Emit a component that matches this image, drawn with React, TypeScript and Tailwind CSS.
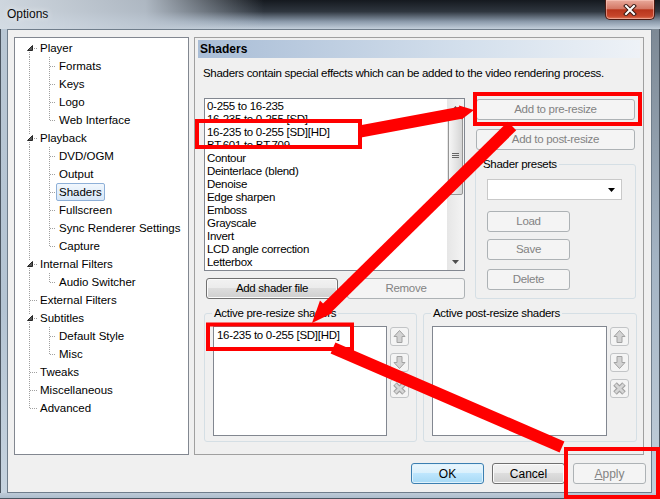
import React from 'react';

type TreeNode = {
  label: string;
  level: 0 | 1;
  caret?: boolean;
  last?: boolean;
  selected?: boolean;
};

const tree: TreeNode[] = [
  { label: 'Player', level: 0, caret: true },
  { label: 'Formats', level: 1 },
  { label: 'Keys', level: 1 },
  { label: 'Logo', level: 1 },
  { label: 'Web Interface', level: 1, last: true },
  { label: 'Playback', level: 0, caret: true },
  { label: 'DVD/OGM', level: 1 },
  { label: 'Output', level: 1 },
  { label: 'Shaders', level: 1, selected: true },
  { label: 'Fullscreen', level: 1 },
  { label: 'Sync Renderer Settings', level: 1 },
  { label: 'Capture', level: 1, last: true },
  { label: 'Internal Filters', level: 0, caret: true },
  { label: 'Audio Switcher', level: 1, last: true },
  { label: 'External Filters', level: 0 },
  { label: 'Subtitles', level: 0, caret: true },
  { label: 'Default Style', level: 1 },
  { label: 'Misc', level: 1, last: true },
  { label: 'Tweaks', level: 0 },
  { label: 'Miscellaneous', level: 0 },
  { label: 'Advanced', level: 0 },
];

const shaderFiles = [
  '0-255 to 16-235',
  '16-235 to 0-255 [SD]',
  '16-235 to 0-255 [SD][HD]',
  'BT.601 to BT.709',
  'Contour',
  'Deinterlace (blend)',
  'Denoise',
  'Edge sharpen',
  'Emboss',
  'Grayscale',
  'Invert',
  'LCD angle correction',
  'Letterbox',
];

const dot = { stroke: '#a0a0a0', strokeDasharray: '1 1' };

function TreeGutter({ node, first, lastRoot }: { node: TreeNode; first: boolean; lastRoot: boolean }) {
  if (node.level === 1) {
    return (
      <svg width="41" height="18" className="shrink-0">
        <line x1="14.5" y1="0" x2="14.5" y2="18" {...dot} />
        <line x1="34.5" y1="0" x2="34.5" y2={node.last ? 10 : 18} {...dot} />
        <line x1="35" y1="9.5" x2="41" y2="9.5" {...dot} />
      </svg>
    );
  }
  return (
    <svg width="22" height="18" className="shrink-0">
      {node.caret ? (
        <>
          {!first && <line x1="14.5" y1="0" x2="14.5" y2="5" {...dot} />}
          <line x1="14.5" y1="13" x2="14.5" y2="18" {...dot} />
          <line x1="19" y1="9.5" x2="22" y2="9.5" {...dot} />
          <path d="M17.5 6.5 V11.5 H12.5 Z" fill="#595959" stroke="#262626" strokeLinejoin="round" />
        </>
      ) : (
        <>
          <line x1="14.5" y1="0" x2="14.5" y2={lastRoot ? 10 : 18} {...dot} />
          <line x1="15" y1="9.5" x2="22" y2="9.5" {...dot} />
        </>
      )}
    </svg>
  );
}

type BtnKind = 'normal' | 'disabled' | 'default';

function Button({ kind = 'normal', className = '', children }: { kind?: BtnKind; className?: string; children: React.ReactNode }) {
  const look =
    kind === 'disabled'
      ? 'border-[#adb2b5] bg-[#f4f4f4] text-[#838383]'
      : kind === 'default'
        ? 'border-[#3c7fb1] bg-[linear-gradient(#eaf6fd,#d9f0fc_50%,#bee6fd_50%,#a7d9f5)] shadow-[inset_0_0_0_1px_#dff2fc]'
        : 'border-[#707070] bg-[linear-gradient(#f2f2f2,#ebebeb_50%,#dddddd_50%,#cfcfcf)] shadow-[inset_0_0_0_1px_#fbfbfb]';
  return (
    <div className={`flex shrink-0 items-center justify-center rounded-[3px] border leading-none ${look} ${className}`}>
      {children}
    </div>
  );
}

function SmallBtn({ icon }: { icon: 'up' | 'down' | 'x' }) {
  return (
    <div className="flex h-[19px] w-[19px] items-center justify-center rounded-[3px] border border-[#c2c4c6] bg-[#f4f4f4]">
      <svg width="15" height="15" viewBox="0 0 15 15">
        {icon === 'up' && (
          <path d="M7.5 1.5 L13 7.5 H10 V13.5 H5 V7.5 H2 Z" fill="#d2d2d2" stroke="#a2a2a2" strokeLinejoin="round" />
        )}
        {icon === 'down' && (
          <path d="M7.5 13.5 L13 7.5 H10 V1.5 H5 V7.5 H2 Z" fill="#d2d2d2" stroke="#a2a2a2" strokeLinejoin="round" />
        )}
        {icon === 'x' && (
          <>
            <path d="M3 3 L12 12 M12 3 L3 12" stroke="#a2a2a2" strokeWidth="5" />
            <path d="M3.5 3.5 L11.5 11.5 M11.5 3.5 L3.5 11.5" stroke="#d6d6d6" strokeWidth="2.6" />
          </>
        )}
      </svg>
    </div>
  );
}

function ShaderGroup({ title, listW, items }: { title: string; listW: string; items: string[] }) {
  return (
    <fieldset className="h-full w-full rounded-[3px] border border-[#d5dfe5]">
      <legend className="ml-[7px] px-[2px] leading-[14px]">{title}</legend>
      <div className="mt-[6px] flex pl-[8px]">
        <div className={`h-[110px] border border-[#828790] bg-white pl-[3px] pt-[2px] leading-[13px] ${listW}`}>
          {items.map((s) => (
            <div key={s}>{s}</div>
          ))}
        </div>
        <div className="ml-[3px] mt-[1px] flex flex-col gap-[7px]">
          <SmallBtn icon="up" />
          <SmallBtn icon="down" />
          <SmallBtn icon="x" />
        </div>
      </div>
    </fieldset>
  );
}

export default function App() {
  return (
    <div className="relative flex h-[499px] w-[660px] flex-col overflow-hidden font-['Liberation_Sans',Arial,sans-serif] text-[11.5px] text-black">
      {/* title bar */}
      <div className="flex h-[29px] shrink-0 items-start justify-between bg-[linear-gradient(90deg,rgba(212,220,228,0.97)_0%,rgba(190,200,211,0.9)_22%,rgba(70,78,88,0)_40%),linear-gradient(180deg,#15191f_0%,#2f363f_40%,#8d9cad_75%,#c3cfdb_100%)]">
        <div className="pl-[7px] pt-[7px] text-[12px] leading-[14px] text-[#0a0a0a] [text-shadow:0_0_6px_#ffffff]">Options</div>
        <div className="mr-[5px] flex h-[20px] w-[50px] items-center justify-center rounded-b-[5px] border border-t-0 border-[#4a1a12] bg-[linear-gradient(#e9a99b,#d47866_45%,#b8351c_52%,#c7462b_85%,#de7a5c)] shadow-[inset_0_0_0_1px_rgba(255,210,200,0.5)]">
          <svg width="14" height="12" viewBox="0 0 14 12">
            <path d="M3 2 L11 10 M11 2 L3 10" stroke="#3a1a14" strokeWidth="4" strokeLinecap="square" />
            <path d="M3 2 L11 10 M11 2 L3 10" stroke="#ffffff" strokeWidth="2" strokeLinecap="square" />
          </svg>
        </div>
      </div>

      <div className="flex h-[464px] shrink-0">
        <div className="w-[7px] shrink-0 border-l border-[#4b5560] bg-[linear-gradient(#b9c7d4,#b4c4d3_60%,#c6d3df)]" />
        {/* client area */}
        <div className="flex w-[645px] shrink-0 flex-col border border-[#6f7d8b] bg-[#f0f0f0]">
          <div className="flex pl-[6px] pt-[7px]">
            {/* tree */}
            <div className="h-[418px] w-[175px] shrink-0 border border-[#828790] bg-white pt-[1px]">
              {tree.map((n, i) => (
                <div key={n.label} className="flex h-[18px] items-center">
                  <TreeGutter node={n} first={i === 0} lastRoot={i === tree.length - 1} />
                  <span
                    className={`h-[18px] whitespace-nowrap rounded-[2px] border pl-[2px] pr-[2px] leading-[16px] ${
                      n.selected
                        ? 'border-[#8eb0d8] bg-[linear-gradient(#f1f7fd,#d7e7f8)]'
                        : 'border-transparent'
                    }`}
                  >
                    {n.label}
                  </span>
                </div>
              ))}
            </div>

            {/* page */}
            <div className="ml-[5px] h-[418px] w-[450px] shrink-0 border border-[#a0a0a0] tracking-[-0.3px]">
              <div className="mx-[3px] mt-[2px] h-[18px] bg-[linear-gradient(90deg,#a9bdd6,#d3dfec_60%,#eef2f7)] pl-[2px] text-[12px] font-bold leading-[18px] tracking-normal">
                Shaders
              </div>
              <div className="mt-[8px] pl-[8px] leading-[14px]">
                Shaders contain special effects which can be added to the video rendering process.
              </div>

              <div className="mt-[18px] flex pl-[9px]">
                <div className="w-[261px] shrink-0">
                  <div className="flex h-[173px] border border-[#828790] bg-white">
                    <div className="flex-1 pl-[2px] pt-[1px] leading-[13px]">
                      {shaderFiles.map((s) => (
                        <div key={s} className="whitespace-nowrap">
                          {s}
                        </div>
                      ))}
                    </div>
                    <div className="flex w-[17px] flex-col bg-[linear-gradient(90deg,#e6e6e6,#f4f4f4)]">
                      <div className="flex h-[17px] items-center justify-center">
                        <svg width="7" height="4">
                          <path d="M0 4 L3.5 0 L7 4 Z" fill="#4d4d4d" />
                        </svg>
                      </div>
                      <div className="mx-[1px] flex h-[79px] items-center justify-center rounded-[2px] border border-[#959595] bg-[linear-gradient(90deg,#f5f5f5,#e6e6e6_50%,#d5d5d5)]">
                        <svg width="7" height="6">
                          <path d="M0 0.5 H7 M0 2.5 H7 M0 4.5 H7" stroke="#666666" />
                        </svg>
                      </div>
                      <div className="flex-1" />
                      <div className="flex h-[17px] items-center justify-center">
                        <svg width="7" height="4">
                          <path d="M0 0 L3.5 4 L7 0 Z" fill="#4d4d4d" />
                        </svg>
                      </div>
                    </div>
                  </div>
                  <div className="mt-[7px] flex">
                    <Button className="ml-[2px] h-[21px] w-[132px]">Add shader file</Button>
                    <Button kind="disabled" className="ml-[9px] h-[21px] w-[118px]">
                      Remove
                    </Button>
                  </div>
                </div>

                <div className="ml-[10px] w-[161px] shrink-0">
                  <Button kind="disabled" className="ml-[1px] mt-[1px] h-[21px] w-[159px]">
                    Add to pre-resize
                  </Button>
                  <Button kind="disabled" className="ml-[1px] mt-[9px] h-[21px] w-[159px]">
                    Add to post-resize
                  </Button>
                  <fieldset className="mt-[7px] h-[142px] w-[161px] rounded-[3px] border border-[#d5dfe5]">
                    <legend className="ml-[5px] px-[2px] leading-[14px]">Shader presets</legend>
                    <div className="flex flex-col pl-[11px]">
                      <div className="mt-[8px] flex h-[21px] w-[135px] items-center justify-end border border-[#c9c9c9] bg-white pr-[6px]">
                        <svg width="7" height="4">
                          <path d="M0 0 L3.5 4 L7 0 Z" fill="#000000" />
                        </svg>
                      </div>
                      <Button kind="disabled" className="mt-[11px] h-[21px] w-[83px]">
                        Load
                      </Button>
                      <Button kind="disabled" className="mt-[7px] h-[21px] w-[83px]">
                        Save
                      </Button>
                      <Button kind="disabled" className="mt-[9px] h-[21px] w-[83px]">
                        Delete
                      </Button>
                    </div>
                  </fieldset>
                </div>
              </div>

              <div className="mt-[7px] flex pl-[9px]">
                <div className="h-[136px] w-[213px] shrink-0">
                  <ShaderGroup title="Active pre-resize shaders" listW="w-[174px]" items={['16-235 to 0-255 [SD][HD]']} />
                </div>
                <div className="ml-[6px] h-[136px] w-[214px] shrink-0">
                  <ShaderGroup title="Active post-resize shaders" listW="w-[175px]" items={[]} />
                </div>
              </div>
            </div>
          </div>

          {/* dialog buttons */}
          <div className="mt-[8px] flex justify-end gap-[8px] pr-[5px] text-[12px]">
            <Button kind="default" className="h-[21px] w-[73px]">
              OK
            </Button>
            <Button className="h-[21px] w-[73px]">Cancel</Button>
            <Button kind="disabled" className="h-[21px] w-[73px]">
              <span className="underline">A</span>pply
            </Button>
          </div>
        </div>
        <div className="w-[8px] shrink-0 border-r border-[#4b5560] bg-[linear-gradient(#7d8995,#a4b4c4_50%,#c2cfdb)]" />
      </div>
      <div className="h-[6px] shrink-0 border-b border-[#4b5560] bg-[linear-gradient(#bdcad7,#aebecd)]" />

      {/* red annotations drawn over the screenshot */}
      <svg className="pointer-events-none absolute left-0 top-0" width="660" height="499">
        <g fill="none" stroke="#ff0000" strokeWidth="4">
          <rect x="197" y="121" width="163" height="26" />
          <rect x="475" y="94" width="165" height="30" />
          <rect x="208" y="324.5" width="144" height="24.5" />
          <rect x="566" y="449" width="92" height="48" />
        </g>
        <g stroke="#ff0000" strokeWidth="12">
          <line x1="360" y1="131.5" x2="462" y2="112.5" />
          <line x1="512" y1="126" x2="326" y2="309" />
          <line x1="333" y1="348" x2="562" y2="447" />
        </g>
        <g fill="#ff0000">
          <polygon points="474,110 461.5,119.5 459,105.5" />
          <polygon points="312,323 332.5,313 320,300.5" />
        </g>
      </svg>
    </div>
  );
}
